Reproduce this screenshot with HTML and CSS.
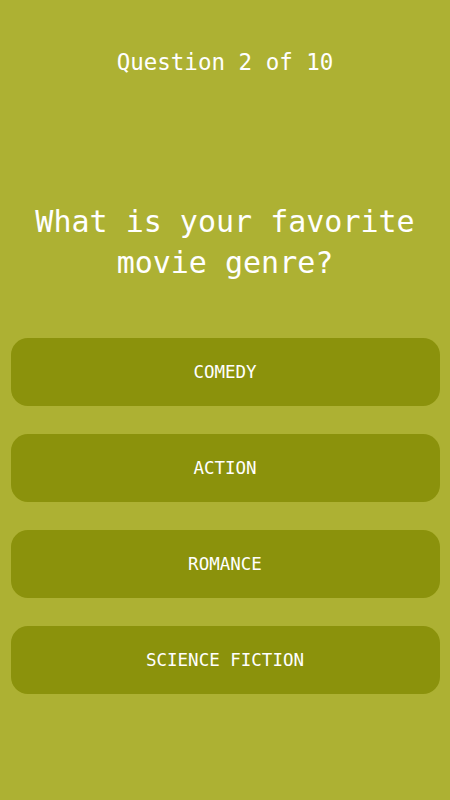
FILE: index.html
```html
<!DOCTYPE html>
<html lang="en">

<head>
    <meta charset="UTF-8">
    <meta name="viewport" content="width=device-width, initial-scale=1.0">
    <title>Quiz</title>
    <link rel="stylesheet" href="styles.css">
</head>

<body>

    <div class="contador">Question 2 of 10</div>

    <h1 class="pregunta">What is your favorite movie genre?</h1>

    <div class="respuestas">
        <button class="respuesta">COMEDY</button>
        <button class="respuesta">ACTION</button>
        <button class="respuesta">ROMANCE</button>
        <button class="respuesta">SCIENCE FICTION</button>
    </div>

</body>

</html>
```

FILE: styles.css
```css
body {
    background: rgb(173, 177, 51);
    color: white;
    font-family: 'DejaVu Sans Mono', 'Liberation Mono', monospace;
    padding: 0px 10.5px;
    margin: 0px;
}

.contador {
    padding-top: 47px;
    font-size: 22.5px;
    line-height: 30px;
    text-align: center;
}

.pregunta {
    margin: 124px 0px 0px;
    padding: 0px 20px;
    font-size: 30px;
    font-weight: normal;
    line-height: 41px;
    text-align: center;
}

.respuestas {
    display: flex;
    flex-direction: column;
    gap: 28.5px;
    margin-top: 55px;
}

.respuesta {
    height: 67.5px;
    padding-top: 2px;
    border: none;
    border-radius: 17px;
    color: white;
    background: rgb(139, 146, 12);
    font-family: inherit;
    font-size: 17.5px;
    cursor: pointer;
}
```
